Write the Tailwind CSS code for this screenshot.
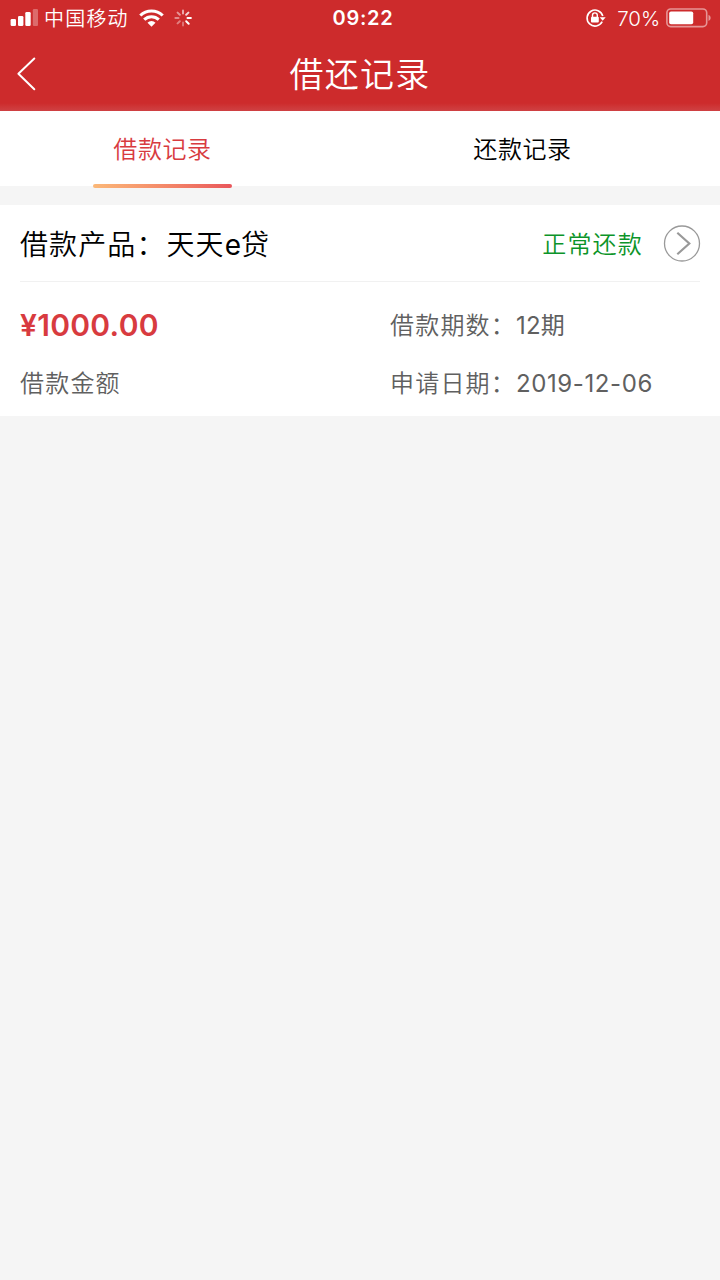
<!DOCTYPE html>
<html lang="zh-CN">
<head>
<meta charset="utf-8">
<meta name="viewport" content="width=device-width, initial-scale=1">
<title>借还记录</title>
<script src="https://cdn.jsdelivr.net/npm/@tailwindcss/browser@4"></script>
</head>
<body class="min-h-screen bg-[#f5f5f5] font-['Inter','Noto_Sans_CJK_SC',sans-serif] text-black">
<header class="h-[111px] bg-linear-to-b from-[#cd2b2c] from-93% to-[#cf4143] text-white">
  <div class="grid h-9 grid-cols-[1fr_auto_1fr] items-center pr-[9px] pl-[10px]">
    <div class="flex items-center">
      <svg class="h-[18px] w-7 shrink-0" viewBox="0 0 28 18" fill="#fff"><rect x=".6" y="10" width="5.4" height="7" rx="1.3"/><rect x="8" y="7" width="5.4" height="10" rx="1.3"/><rect x="15.3" y="3" width="5.4" height="14" rx="1.3"/><rect x="22.8" y="0" width="5.4" height="17" rx="1.3" opacity=".3"/></svg>
      <span class="ml-[6px] pt-[2px] text-[20px] leading-[34px] font-[350] tracking-[1.2px]">中国移动</span>
      <svg class="ml-[10px] h-[18px] w-[25px] shrink-0" viewBox="0 0 25 18"><g fill="none" stroke="#fff" stroke-width="3.1"><path d="M1.3 6.5a16 16 0 0 1 22.4 0"/><path d="M5.2 10.7a10.4 10.4 0 0 1 14.6 0"/></g><path d="M8.5 13.8a5.6 5.6 0 0 1 8 0l-4 4z" fill="#fff"/></svg>
      <svg class="ml-[10px] h-[18px] w-[18px] shrink-0" viewBox="-9 -9 18 18" stroke="#fff" stroke-width="2" stroke-linecap="round"><path d="M0-4.5V-7.6" opacity=".6"/><path d="M3.2-3.2l2.2-2.2" opacity=".8"/><path d="M4.5 0h3.4"/><path d="M3.2 3.2l2.5 2.5"/><path d="M0 4.5v3.1" opacity=".35"/><path d="M-3.2 3.2l-2.2 2.2" opacity=".4"/><path d="M-4.5 0h-3.1" opacity=".45"/><path d="M-3.2-3.2l-2.2-2.2" opacity=".5"/></svg>
    </div>
    <div class="pl-[5px] text-[20px] leading-9 font-semibold tracking-[.7px]">09:22</div>
    <div class="flex items-center justify-end">
      <svg class="h-5 w-[22px] shrink-0" viewBox="0 0 22 20" fill="none" stroke="#fff"><path d="M17.2 13.7A8 8 0 1 1 17.8 8" stroke-width="1.6"/><path d="M14.7 9.2h6l-3 3.6z" fill="#fff" stroke="none"/><rect x="6" y="8.8" width="7.8" height="5.8" rx="1" fill="#fff" stroke="none"/><path d="M7.5 9V7.3a2.4 2.4 0 0 1 4.8 0V9" stroke-width="1.4"/></svg>
      <span class="ml-[10px] pt-[2px] text-[20.5px] leading-[34px] font-[350] tracking-[-.1px]">70%</span>
      <svg class="ml-[6px] h-5 w-[45px] shrink-0" viewBox="0 0 45 20"><rect x=".9" y="1" width="39.8" height="17.6" rx="3.8" fill="none" stroke="#fff" stroke-width="1.6" opacity=".5"/><rect x="3.2" y="3.4" width="24" height="12.8" rx="1.8" fill="#fff"/><path d="M42.5 6.8q2.2 1 2.2 3.1t-2.2 3.1z" fill="#fff" opacity=".5"/></svg>
    </div>
  </div>
  <div class="grid h-[75px] grid-cols-[60px_1fr_60px] items-center">
    <svg class="ml-4 h-9 w-5" viewBox="0 0 20 36" fill="none" stroke="#fff" stroke-width="2" stroke-linecap="round" stroke-linejoin="round"><path d="M18.3 2.5 2.4 17.8l15.9 15.5"/></svg>
    <h1 class="pt-px text-center text-[34px] leading-[75px] font-[350] tracking-[1.3px]">借还记录</h1>
  </div>
</header>
<nav class="grid h-[75px] grid-cols-2 bg-white text-center text-[24px] leading-[77px] font-[350] tracking-[.6px]">
  <div class="relative pr-[35px] text-[#d83b3f]">借款记录<span class="absolute top-[73px] left-[93px] h-1 w-[139px] rounded-full bg-linear-to-r from-[#fbb878] to-[#e9565b]"></span></div>
  <div class="pr-[35px]">还款记录</div>
</nav>
<main class="mt-[19px] h-[211px] bg-white px-5">
  <div class="flex h-[77px] items-center border-b border-[#f1f1f1]">
    <h2 class="pt-[3px] text-[28px] leading-[74px] font-[350] tracking-[1.1px]">借款产品：<span class="ml-px">天天<span class="font-normal tracking-[0px]">e</span>贷</span></h2>
    <span class="ml-auto pt-[3px] text-[24px] leading-[74px] font-[350] tracking-[1.2px] text-[#0c9429]">正常还款</span>
    <svg class="-mr-px ml-[20px] h-[38px] w-[38px] shrink-0" viewBox="0 0 38 38" fill="none" stroke="#999"><circle cx="19" cy="19.5" r="17.5" stroke-width="1.3"/><path d="m14.3 8.8 12 10.7-12 10.7" stroke-width="2.2"/></svg>
  </div>
  <div class="grid grid-cols-[370px_1fr] pt-[16px] text-[24px] leading-[58px] font-[350] tracking-[1.2px] text-[#606060]">
    <div class="-mt-[2px] text-[30px] font-semibold tracking-[.3px] text-[#d83b3f]">¥1000.00</div>
    <div class="-mt-px mb-px">借款期数：<span class="font-[380] tracking-[.2px]">12期</span></div>
    <div class="-mt-px">借款金额</div>
    <div class="-mt-px">申请日期：<span class="font-normal tracking-[.6px]">2019-12-06</span></div>
  </div>
</main>
</body>
</html>
